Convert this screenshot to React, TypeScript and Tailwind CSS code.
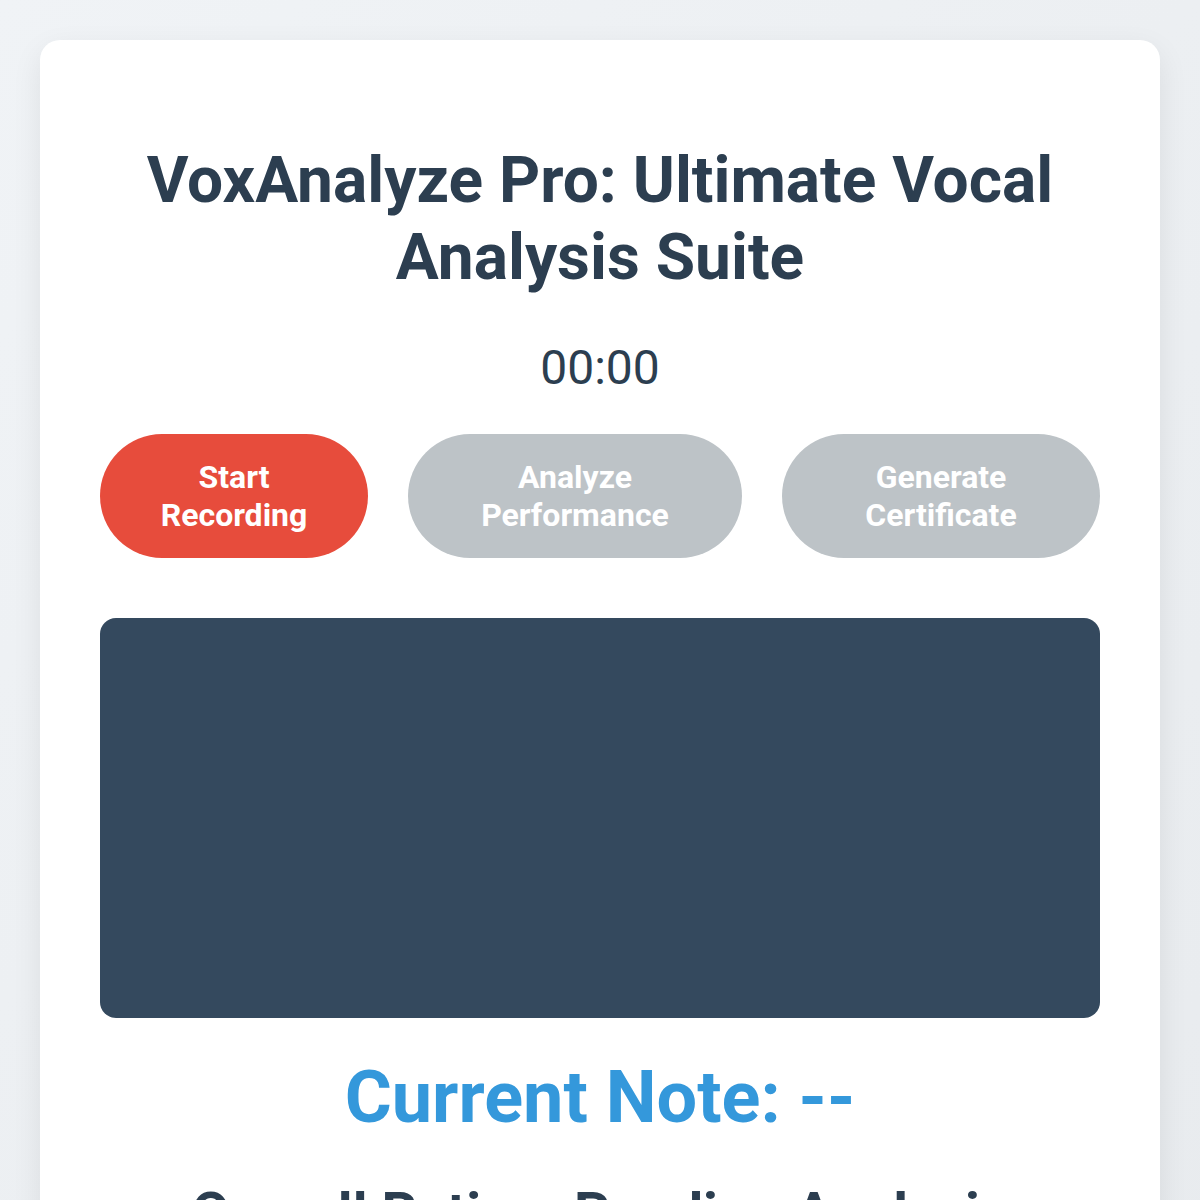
import React from "react";

export default function App() {
  return (
    <div
      className="min-h-screen w-full bg-gradient-to-br from-[#f0f3f6] to-[#e8ebee] p-10"
      style={{ fontFamily: "Roboto, 'Liberation Sans', sans-serif" }}
    >
      <div className="rounded-[20px] bg-white px-[60px] pt-[60px] pb-[60px] shadow-[0_10px_30px_rgba(0,0,0,0.08)]">
        <h1 className="mt-[43px] mb-[43px] text-center text-[64px] font-bold leading-[1.2] text-[#2c3e50]">
          VoxAnalyze Pro: Ultimate Vocal Analysis Suite
        </h1>
        <div className="text-center text-[48px] leading-[1.172] text-[#2c3e50]">00:00</div>
        <div className="mt-[38px] flex gap-10">
          <button className="w-[268px] rounded-full bg-[#e74c3c] py-6 text-[32px] font-bold leading-[38px] text-white">
            Start<br />Recording
          </button>
          <button className="w-[334px] rounded-full bg-[#bdc3c7] py-6 text-[32px] font-bold leading-[38px] text-white">
            Analyze<br />Performance
          </button>
          <button className="w-[318px] rounded-full bg-[#bdc3c7] py-6 text-[32px] font-bold leading-[38px] text-white">
            Generate<br />Certificate
          </button>
        </div>
        <div className="mt-[60px] h-[400px] rounded-2xl bg-[#34495e]" />
        <div className="mt-[38px] text-center text-[72px] font-bold leading-[1.172] text-[#3498db]">
          Current Note: --
        </div>
        <div className="mt-[41px] text-center text-[56px] font-bold leading-[1.172] text-[#2c3e50]">
          Overall Rating: Pending Analysis
        </div>
      </div>
    </div>
  );
}
